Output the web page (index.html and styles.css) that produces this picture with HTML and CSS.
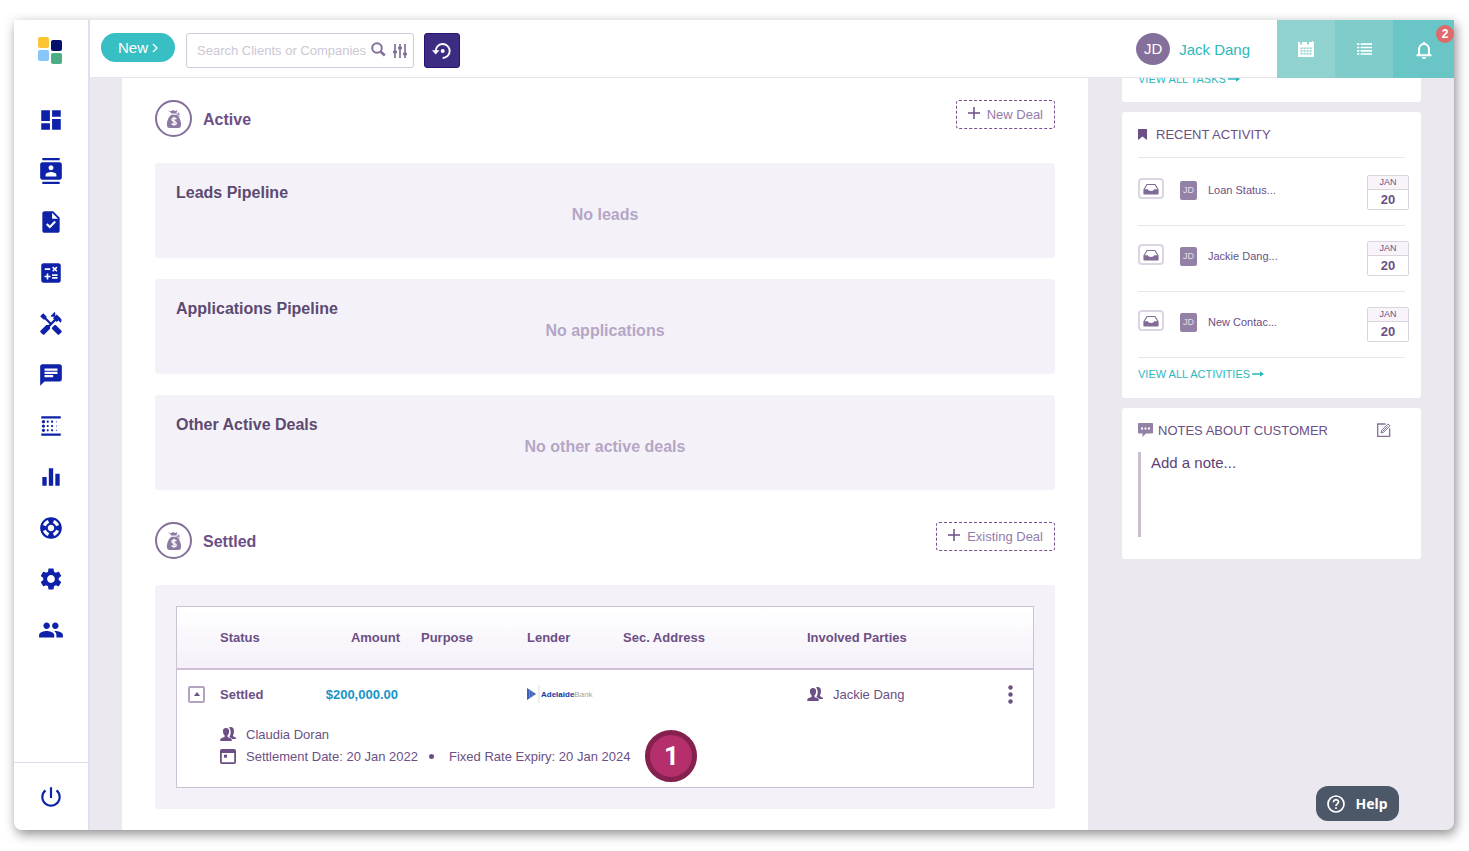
FILE: index.html
```
<!DOCTYPE html>
<html lang="en">
<head>
  <meta charset="utf-8">
  <title>Deals</title>
  <link rel="stylesheet" href="styles.css">
</head>
<body>
<svg class="defs" aria-hidden="true">
  <symbol id="moneybag" viewBox="0 0 16 20">
    <path d="M2 1.500l3 .7 2-1.200 2 1 2.500-.8L10.200 4.500H5.300L4.500 3.200z"/>
    <path d="M10.500 5l3 .4-1.300-2 M11 5.500l2.500 2.500" fill="none" stroke="currentColor" stroke-width="1"/>
    <path d="M5.300 5.800h5C13.500 8 15.500 12.500 15 16.500c-.2 1.700-1 2.500-2.700 2.500H3.700C2 19 1.200 18.200 1 16.500.500 12.500 2.500 8 5.300 5.800z"/>
    <path d="M10.300 10.200C9.800 9 6 8.700 5.900 10.700c0 2 4.400 1.300 4.400 3.500 0 2-4 1.900-4.600.3M8 7.800v9" fill="none" stroke="#fff" stroke-width="1.300"/>
  </symbol>
  <symbol id="people" viewBox="0 0 16 14">
    <path d="M6 1C3.700 1 2.700 2.600 3 5c.2 1.700.8 2.700 1.600 3.300v1.400C4.400 10.800 1 10.600.3 12.200V14h11.400v-1.800C11 10.600 7.700 10.800 7.500 9.700V8.300C8.300 7.700 8.900 6.700 9.100 5c.2-2.400-.8-4-3.100-4z"/>
    <path d="M9 .4c3-1 5 .6 4.900 3.100-.1 1.700.4 2.700-.9 4.500v1c.4 1 2.400.8 2.900 2.100V12h-3.600C11.500 10.800 9.700 10.500 9.400 9.700 11 7.500 11.400 3 9 .4z"/>
  </symbol>
  <symbol id="inbox" viewBox="0 0 16 12">
    <path d="M1 6.500L4 1.500h8l3 5" fill="none" stroke="currentColor" stroke-width="1.100"/>
    <path d="M.4 6.300h4.400c.5 2.200 5.900 2.200 6.400 0h4.400v4.200c0 .7-.4 1-1 1H1.400c-.6 0-1-.3-1-1z"/>
  </symbol>
  <symbol id="arrow" viewBox="0 0 12 8">
    <path d="M0 3.300h8V1.300L12 4 8 6.700v-2H0z"/>
  </symbol>
</svg>

<div class="window">
  <nav class="sidebar">
    <a class="logo" href="#" aria-label="Home">
      <svg width="24" height="27" viewBox="0 0 24 27">
        <rect x="0" y="0" width="11" height="11" rx="2" fill="#fcc434"/>
        <rect x="13" y="3" width="11" height="11" rx="2" fill="#05106b"/>
        <rect x="0" y="13" width="11" height="11" rx="2" fill="#88c6f7"/>
        <rect x="13" y="16" width="11" height="11" rx="2" fill="#4cae84"/>
      </svg>
    </a>
    <div class="menu">
      <a href="#" aria-label="Dashboard"><svg viewBox="0 0 24 24"><path d="M3 13h8V3H3v10zm0 8h8v-6H3v6zm10 0h8V11h-8v10zm0-18v6h8V3h-8z"/></svg></a>
      <a href="#" aria-label="Contacts"><svg viewBox="0 0 24 24"><path d="M20 0H4v2h16V0zM4 24h16v-2H4v2zM20 4H4c-1.100 0-2 .9-2 2v12c0 1.100.9 2 2 2h16c1.100 0 2-.9 2-2V6c0-1.100-.9-2-2-2zm-8 2.750c1.240 0 2.250 1.010 2.250 2.250s-1.010 2.250-2.250 2.250S9.750 10.240 9.750 9 10.760 6.750 12 6.750zM17 17H7v-1.500c0-1.670 3.330-2.500 5-2.500s5 .83 5 2.500V17z"/></svg></a>
      <a href="#" aria-label="Tasks"><svg viewBox="0 0 24 24"><path d="M14 2H6c-1.100 0-1.990.9-1.990 2L4 20c0 1.100.89 2 1.990 2H18c1.100 0 2-.9 2-2V8l-6-6zm-3.060 16L7.400 14.460l1.410-1.410 2.120 2.120 4.240-4.240 1.410 1.410L10.940 18zM13 9V3.500L18.500 9H13z"/></svg></a>
      <a href="#" aria-label="Calculators"><svg viewBox="0 0 24 24"><path d="M19 3H5c-1.100 0-2 .9-2 2v14c0 1.100.9 2 2 2h14c1.100 0 2-.9 2-2V5c0-1.100-.9-2-2-2zm-5.970 4.060L14.090 6l1.410 1.410L16.910 6l1.060 1.060-1.410 1.410 1.410 1.410-1.060 1.060-1.410-1.400-1.410 1.410-1.060-1.060 1.410-1.410-1.410-1.420zm-6.780.66h5v1.500h-5v-1.500zM11.500 16h-2v2H8v-2H6v-1.500h2v-2h1.500v2h2V16zm6.500 1.250h-5v-1.500h5v1.500zm0-2.500h-5v-1.500h5v1.500z"/></svg></a>
      <a href="#" aria-label="Tools"><svg viewBox="0 0 24 24"><path d="M21.670 18.170l-5.300-5.300h-.99l-2.540 2.540v.99l5.300 5.300c.39.39 1.020.39 1.410 0l2.120-2.120c.39-.38.39-1.020 0-1.410z"/><path d="M17.340 10.190l1.410-1.410 2.120 2.120c1.170-1.170 1.170-3.070 0-4.240l-3.540-3.540-1.410 1.410V1.710L15.220 1l-3.540 3.540.71.71h2.830l-1.410 1.410 1.060 1.060-2.890 2.890-4.130-4.130V5.060L4.830 2.040 2 4.870 5.030 7.900h1.410l4.130 4.130-.85.85H7.600l-5.300 5.300c-.39.39-.39 1.020 0 1.410l2.120 2.120c.39.39 1.020.39 1.410 0l5.300-5.300v-2.120l5.150-5.150 1.060 1.050z"/></svg></a>
      <a href="#" aria-label="Messages"><svg viewBox="0 0 24 24"><path d="M20 2H4c-1.100 0-1.990.9-1.990 2L2 22l4-4h14c1.100 0 2-.9 2-2V4c0-1.100-.9-2-2-2zM6 9h12v2H6V9zm8 5H6v-2h8v2zm4-6H6V6h12v2z"/></svg></a>
      <a href="#" aria-label="Pipelines"><svg viewBox="0 0 24 24"><path d="M5 17.500c.83 0 1.500-.67 1.500-1.500s-.67-1.500-1.500-1.500-1.500.67-1.500 1.500.67 1.500 1.500 1.500zM9 13c.55 0 1-.45 1-1s-.45-1-1-1-1 .45-1 1 .45 1 1 1zm0-4c.55 0 1-.45 1-1s-.45-1-1-1-1 .45-1 1 .45 1 1 1zM3 21h18v-2H3v2zM5 9.500c.83 0 1.500-.67 1.500-1.500S5.830 6.500 5 6.500 3.500 7.170 3.500 8 4.170 9.500 5 9.500zm0 4c.83 0 1.500-.67 1.500-1.500s-.67-1.500-1.500-1.500-1.500.67-1.500 1.500.67 1.500 1.500 1.500zM9 17c.55 0 1-.45 1-1s-.45-1-1-1-1 .45-1 1 .45 1 1 1zm8-.5c.28 0 .5-.22.5-.5s-.22-.5-.5-.5-.5.22-.5.5.22.5.5.5zM3 3v2h18V3H3zm14 5.500c.28 0 .5-.22.5-.5s-.22-.5-.5-.5-.5.22-.5.5.22.5.5.5zm0 4c.28 0 .5-.22.5-.5s-.22-.5-.5-.5-.5.22-.5.5.22.5.5.5zM13 9c.55 0 1-.45 1-1s-.45-1-1-1-1 .45-1 1 .45 1 1 1zm0 4c.55 0 1-.45 1-1s-.45-1-1-1-1 .45-1 1 .45 1 1 1zm0 4c.55 0 1-.45 1-1s-.45-1-1-1-1 .45-1 1 .45 1 1 1z"/></svg></a>
      <a href="#" aria-label="Reports"><svg viewBox="0 0 24 24"><path d="M10 20h4V4h-4v16zm-6 0h4v-8H4v8zM16 9v11h4V9h-4z"/></svg></a>
      <a href="#" aria-label="Support"><svg viewBox="0 0 24 24"><path d="M12 2C6.480 2 2 6.480 2 12s4.480 10 10 10 10-4.480 10-10S17.520 2 12 2zm7.460 7.120l-2.780 1.150c-.51-1.360-1.580-2.440-2.950-2.940l1.150-2.780c2.100.8 3.770 2.470 4.580 4.570zM12 15c-1.660 0-3-1.340-3-3s1.340-3 3-3 3 1.340 3 3-1.340 3-3 3zM9.130 4.540l1.170 2.780c-1.380.5-2.470 1.590-2.980 2.970L4.540 9.130c.81-2.110 2.480-3.780 4.590-4.590zM4.540 14.870l2.780-1.150c.51 1.380 1.590 2.460 2.970 2.960l-1.170 2.780c-2.100-.81-3.770-2.480-4.580-4.590zm10.340 4.590l-1.150-2.780c1.370-.51 2.450-1.590 2.950-2.970l2.780 1.170c-.81 2.100-2.480 3.770-4.580 4.580z"/></svg></a>
      <a href="#" aria-label="Settings"><svg viewBox="0 0 24 24"><path d="M19.140 12.940c.04-.3.060-.61.060-.94 0-.32-.02-.64-.07-.94l2.030-1.580c.18-.14.23-.41.12-.61l-1.920-3.320c-.12-.22-.37-.29-.59-.22l-2.390.96c-.5-.38-1.030-.7-1.620-.94l-.36-2.540c-.04-.24-.24-.41-.48-.41h-3.840c-.24 0-.43.17-.47.41l-.36 2.540c-.59.24-1.130.57-1.620.94l-2.390-.96c-.22-.08-.47 0-.59.22L2.740 8.870c-.12.21-.08.47.12.61l2.030 1.580c-.05.3-.09.63-.09.94s.02.64.07.94l-2.030 1.580c-.18.14-.23.41-.12.61l1.920 3.320c.12.22.37.29.59.22l2.390-.96c.5.38 1.030.7 1.620.94l.36 2.540c.05.24.24.41.48.41h3.840c.24 0 .44-.17.47-.41l.36-2.540c.59-.24 1.130-.56 1.620-.94l2.390.96c.22.08.47 0 .59-.22l1.920-3.320c.12-.22.07-.47-.12-.61l-2.010-1.580zM12 15.600c-1.980 0-3.600-1.620-3.600-3.600s1.620-3.600 3.600-3.600 3.600 1.620 3.600 3.600-1.620 3.600-3.600 3.600z"/></svg></a>
      <a href="#" aria-label="Team"><svg viewBox="0 0 24 24"><path d="M16 11c1.660 0 2.990-1.340 2.990-3S17.660 5 16 5s-3 1.340-3 3 1.340 3 3 3zm-8 0c1.660 0 2.990-1.340 2.990-3S9.660 5 8 5 5 6.340 5 8s1.340 3 3 3zm0 2c-2.330 0-7 1.170-7 3.500V19h14v-2.500c0-2.330-4.670-3.500-7-3.500zm8 0c-.29 0-.62.02-.97.05 1.160.84 1.970 1.970 1.970 3.450V19h6v-2.500c0-2.330-4.670-3.500-7-3.500z"/></svg></a>
    </div>
    <div class="logout">
      <a href="#" aria-label="Log out"><svg viewBox="0 0 24 24"><path d="M13 3h-2v10h2V3zm4.830 2.170l-1.420 1.420C17.990 7.860 19 9.810 19 12c0 3.870-3.130 7-7 7s-7-3.130-7-7c0-2.190 1.010-4.140 2.580-5.420L6.170 5.170C4.230 6.820 3 9.260 3 12c0 4.970 4.030 9 9 9s9-4.030 9-9c0-2.740-1.230-5.180-3.170-6.830z"/></svg></a>
    </div>
  </nav>

  <div class="page">
    <header class="topbar">
      <button class="new-button">New
        <svg width="6" height="10" viewBox="0 0 6 10"><path d="M1 1l4 4-4 4" fill="none" stroke="#fff" stroke-width="1.300"/></svg>
      </button>
      <div class="search">
        <input type="text" placeholder="Search Clients or Companies" aria-label="Search Clients or Companies">
        <svg class="magnifier" width="15" height="15" viewBox="0 0 15 15"><circle cx="6" cy="6" r="4.800" fill="none" stroke="currentColor" stroke-width="2"/><path d="M9.500 9.500l4.300 4" stroke="currentColor" stroke-width="2.500"/></svg>
        <svg class="sliders" width="14" height="14" viewBox="0 0 14 14"><path d="M2 0v14M7 0v14M12 0v14" stroke="currentColor" stroke-width="1.700"/><path d="M0 8h4M5 4h4M10 10h4" stroke="currentColor" stroke-width="2.400"/></svg>
      </div>
      <button class="history-button" aria-label="History">
        <svg width="20" height="18" viewBox="0 0 20 18"><path d="M3.700 9.500a7 7 0 1 1 7 6.500" fill="none" stroke="#fff" stroke-width="1.900"/><path d="M0 8.200h7.500L3.700 12.500z" fill="#fff"/><circle cx="10.700" cy="9" r="2" fill="#fff"/></svg>
      </button>
      <a class="user" href="#"><span class="avatar">JD</span>Jack Dang</a>
      <div class="shortcuts">
        <button class="calendar-button" aria-label="Calendar">
          <svg width="16" height="16" viewBox="0 0 16 16"><path d="M0 1h2v2.500h2V1h5v2.500h2V1h3V0h1v1h1v15H0z" fill="#fff"/><path d="M2.500 6.500h11v7h-11z" fill="#8fd2d0"/><path d="M2.500 8.700h11M2.500 11.300h11M5 6.500v7M8 6.500v7M11 6.500v7" stroke="#fff"/></svg>
        </button>
        <button class="list-button" aria-label="List">
          <svg width="15" height="12" viewBox="0 0 15 12"><path d="M0 1.200h2.400M0 4.500h2.400M0 7.800h2.400M0 11h2.400M3.600 1.200H15M3.600 4.500H15M3.600 7.800H15M3.600 11H15" stroke="#fff" stroke-width="1.700"/></svg>
        </button>
        <button class="bell-button" aria-label="Notifications">
          <svg width="16" height="18" viewBox="0 0 16 18"><path d="M3 13V7.500C3 4.500 5 2 8 2s5 2.500 5 5.500V13M.5 13.200h15" fill="none" stroke="#fff" stroke-width="2"/><path d="M7 0h2v2H7zM6 15h4a2 2 0 0 1-4 0z" fill="#fff"/></svg>
          <span class="count">2</span>
        </button>
      </div>
    </header>

    <div class="content">
      <main class="deals">
        <div class="section-head">
          <span class="bag"><svg width="16" height="20"><use href="#moneybag"/></svg></span>
          <h2>Active</h2>
          <button class="deal-button"><svg width="12" height="12" viewBox="0 0 12 12"><path d="M6 0v12M0 6h12" stroke="currentColor" stroke-width="1.500"/></svg>New Deal</button>
        </div>
        <section class="pipeline">
          <h3>Leads Pipeline</h3>
          <p>No leads</p>
        </section>
        <section class="pipeline">
          <h3>Applications Pipeline</h3>
          <p>No applications</p>
        </section>
        <section class="pipeline">
          <h3>Other Active Deals</h3>
          <p>No other active deals</p>
        </section>

        <div class="section-head settled">
          <span class="bag"><svg width="16" height="20"><use href="#moneybag"/></svg></span>
          <h2>Settled</h2>
          <button class="deal-button"><svg width="12" height="12" viewBox="0 0 12 12"><path d="M6 0v12M0 6h12" stroke="currentColor" stroke-width="1.500"/></svg>Existing Deal</button>
        </div>
        <section class="table-box">
          <table>
            <colgroup>
              <col class="col-toggle"><col class="col-status"><col class="col-amount"><col class="col-purpose"><col class="col-lender"><col class="col-address"><col><col class="col-menu">
            </colgroup>
            <thead>
              <tr>
                <th></th>
                <th>Status</th>
                <th class="amount">Amount</th>
                <th>Purpose</th>
                <th>Lender</th>
                <th>Sec. Address</th>
                <th>Involved Parties</th>
                <th></th>
              </tr>
            </thead>
            <tbody>
              <tr class="deal">
                <td><button class="toggle" aria-label="Collapse"><svg width="6" height="4" viewBox="0 0 6 4"><path d="M3 0l3 4H0z"/></svg></button></td>
                <td class="status">Settled</td>
                <td class="amount">$200,000.00</td>
                <td></td>
                <td>
                  <span class="bank">
                    <svg width="13" height="18" viewBox="0 0 13 18"><path d="M0 3l9 6-9 6z" fill="#3c62b8"/><path d="M2.500 4v10M5 6v6" stroke="#8fa8dc" stroke-width=".6"/><path d="M12 0v18" stroke="#ddd"/></svg>
                    <span><b>Adelaide</b>Bank</span>
                  </span>
                </td>
                <td></td>
                <td><span class="party"><svg width="16" height="14"><use href="#people"/></svg>Jackie Dang</span></td>
                <td><button class="more" aria-label="More"><svg width="5" height="19" viewBox="0 0 5 19"><circle cx="2.500" cy="2.500" r="2.200"/><circle cx="2.500" cy="9.500" r="2.200"/><circle cx="2.500" cy="16.500" r="2.200"/></svg></button></td>
              </tr>
              <tr class="details">
                <td></td>
                <td colspan="7">
                  <div class="line"><svg width="16" height="14"><use href="#people"/></svg>Claudia Doran</div>
                  <div class="line">
                    <svg width="16" height="15" viewBox="0 0 16 15"><path d="M0 2C0 .7.700 0 2 0h12c1.300 0 2 .7 2 2v11c0 1.300-.7 2-2 2H2c-1.300 0-2-.7-2-2zm1.800 2v9.300h12.400V4z" fill-rule="evenodd"/><path d="M4 5.700h3v3H4z"/></svg>
                    Settlement Date: 20 Jan 2022
                    <span class="dot"></span>
                    <span class="expiry">Fixed Rate Expiry: 20 Jan 2024<span class="step">1</span></span>
                  </div>
                </td>
              </tr>
            </tbody>
          </table>
        </section>
      </main>

      <aside>
        <section class="card tasks">
          <a class="view-all" href="#">VIEW ALL TASKS <svg width="12" height="8"><use href="#arrow"/></svg></a>
        </section>
        <section class="card activity">
          <h4><svg width="9" height="11" viewBox="0 0 9 11"><path d="M0 0h9v11L4.500 7.500 0 11z"/></svg>RECENT ACTIVITY</h4>
          <ul>
            <li>
              <div class="event"><span class="tray"><svg width="16" height="12"><use href="#inbox"/></svg></span><span class="initials">JD</span>Loan Status...</div>
              <div class="date"><span>JAN</span><b>20</b></div>
            </li>
            <li>
              <div class="event"><span class="tray"><svg width="16" height="12"><use href="#inbox"/></svg></span><span class="initials">JD</span>Jackie Dang...</div>
              <div class="date"><span>JAN</span><b>20</b></div>
            </li>
            <li>
              <div class="event"><span class="tray"><svg width="16" height="12"><use href="#inbox"/></svg></span><span class="initials">JD</span>New Contac...</div>
              <div class="date"><span>JAN</span><b>20</b></div>
            </li>
          </ul>
          <a class="view-all" href="#">VIEW ALL ACTIVITIES <svg width="12" height="8"><use href="#arrow"/></svg></a>
        </section>
        <section class="card notes">
          <h4>
            <svg class="bubble" width="15" height="14" viewBox="0 0 15 14"><path d="M1 0h13c.6 0 1 .4 1 1v8.500c0 .6-.4 1-1 1H8L4.500 14v-3.500H1c-.6 0-1-.4-1-1V1c0-.6.4-1 1-1z"/><path d="M3 4.500h2v2H3zM6.500 4.500h2v2h-2zM10 4.500h2v2h-2z" fill="#fff"/></svg>
            <label for="note">NOTES ABOUT CUSTOMER</label>
            <button class="edit" aria-label="Edit note"><svg width="14" height="14" viewBox="0 0 14 14"><g fill="none" stroke="currentColor"><path d="M8.500 1H.7v12.300h12V5.500" stroke-width="1.300"/><path d="M4 10l.7-2.800L11 .9l2 2-6.300 6.300zM5.500 8.500l5-5"/></g></svg></button>
          </h4>
          <textarea id="note" placeholder="Add a note..."></textarea>
        </section>
      </aside>
    </div>
  </div>

  <button class="help">
    <svg width="18" height="18" viewBox="0 0 18 18"><g fill="none" stroke="#fff" stroke-width="1.700"><circle cx="9" cy="9" r="8"/><path d="M6.500 7.200C6.500 3.800 11.600 4 11.500 7c0 1.900-2.500 2-2.500 4M9 12.300v1.800"/></g></svg>
    Help
  </button>
</div>
</body>
</html>
```
FILE: styles.css
```
* {
  box-sizing: border-box;
}

body {
  margin: 0;
  padding: 20px 15px 21px 14px;
  height: 100vh;
  background: #fff;
  color: #6c4f85;
  font-family: "Liberation Sans", Arial, sans-serif;
  font-size: 13px;
  overflow: hidden;
}

h2, h3, h4, p, ul {
  margin: 0;
  padding: 0;
}

button {
  padding: 0;
  border: none;
  background: none;
  color: inherit;
  font-family: inherit;
  cursor: pointer;
}

a {
  text-decoration: none;
}

svg {
  display: block;
  flex: none;
  fill: currentColor;
}

.defs {
  position: absolute;
  width: 0;
  height: 0;
}

.window {
  position: relative;
  display: flex;
  height: 100%;
  border-radius: 0 0 8px 8px;
  background: #ebe8f0;
  box-shadow: 2px 4px 12px rgba(0, 0, 0, 0.45);
}

/* sidebar */

.sidebar {
  display: flex;
  flex-direction: column;
  flex: none;
  width: 76px;
  border-right: 2px solid #dedff0;
  border-radius: 0 0 0 8px;
  background: #fff;
  color: #0d22a8;
}

.sidebar a {
  color: inherit;
}

.logo {
  padding: 17px 0 0 24px;
}

.menu {
  display: flex;
  flex-direction: column;
  flex: 1;
  align-items: center;
  gap: 25px;
  padding-top: 43px;
}

.menu svg,
.logout svg {
  width: 26px;
  height: 26px;
}

.logout {
  display: flex;
  align-items: center;
  justify-content: center;
  height: 68px;
  border-top: 1px solid #dadcf0;
}

/* top bar */

.page {
  display: flex;
  flex-direction: column;
  flex: 1;
  min-width: 0;
}

.topbar {
  display: flex;
  align-items: flex-start;
  flex: none;
  height: 58px;
  padding: 13px 0 0 11px;
  border-bottom: 1px solid #e6e4ea;
  background: #fff;
}

.new-button {
  display: flex;
  align-items: center;
  justify-content: center;
  gap: 4px;
  width: 74px;
  height: 29px;
  border-radius: 15px;
  background: #38bfc3;
  color: #fff;
  font-size: 15px;
}

.search {
  display: flex;
  align-items: center;
  width: 228px;
  height: 35px;
  margin: 0 10px 0 11px;
  padding: 0 6px 0 10px;
  border: 1px solid #d2cad9;
  border-radius: 3px;
  color: #84709b;
}

.search input {
  flex: 1;
  min-width: 0;
  padding: 0;
  border: none;
  outline: none;
  background: none;
  font-family: inherit;
  font-size: 13px;
}

.search input::placeholder {
  color: #cdc7d4;
}

.magnifier {
  margin-bottom: 3px;
}

.sliders {
  margin-left: 7px;
}

.history-button {
  display: flex;
  align-items: center;
  justify-content: center;
  width: 36px;
  height: 35px;
  border: 1px solid #2a1273;
  border-radius: 3px;
  background: #3d2c82;
}

.user {
  display: flex;
  align-items: center;
  gap: 9px;
  height: 32px;
  margin-left: auto;
  color: #2bb8bc;
  font-size: 15px;
}

.avatar {
  width: 34px;
  height: 32px;
  border-radius: 50%;
  background: #84709b;
  color: #fff;
  line-height: 32px;
  text-align: center;
}

.shortcuts {
  display: flex;
  height: 58px;
  margin: -13px 0 0 27px;
}

.shortcuts button {
  display: flex;
  align-items: center;
  justify-content: center;
  width: 58px;
}

.shortcuts .calendar-button {
  background: #8fd2d0;
}

.shortcuts .list-button {
  background: #7fcccb;
}

.shortcuts .bell-button {
  position: relative;
  width: 61px;
  padding-top: 4px;
  background: #6ac5c6;
}

.count {
  position: absolute;
  top: 5px;
  right: 0;
  width: 18px;
  height: 18px;
  border-radius: 50%;
  background: #df6a6c;
  color: #fff;
  font-size: 12px;
  font-weight: bold;
  line-height: 18px;
}

/* deals */

.content {
  display: flex;
  flex: 1;
  gap: 34px;
  min-height: 0;
  padding: 0 33px 0 32px;
  overflow: hidden;
}

.deals {
  flex: 1;
  min-width: 0;
  padding: 22px 33px 20px;
  background: #fff;
}

.section-head {
  display: flex;
  height: 37px;
  margin-bottom: 26px;
}

.section-head.settled {
  margin-top: 32px;
}

.bag {
  display: flex;
  align-items: center;
  justify-content: center;
  width: 37px;
  height: 37px;
  border: 2px solid #84709b;
  border-radius: 50%;
  color: #8d7aa3;
}

h2 {
  flex: 1;
  margin-left: 11px;
  font-size: 16px;
  line-height: 40px;
}

.deal-button {
  display: flex;
  align-items: center;
  gap: 7px;
  height: 29px;
  padding: 0 11px;
  border: 1px dashed #7a4f90;
  border-radius: 3px;
  color: #927ca9;
  font-size: 13px;
}

.deal-button svg {
  margin-bottom: 3px;
  color: #6c4f85;
}

.pipeline {
  min-height: 95px;
  margin-bottom: 21px;
  padding: 20px 21px;
  border-radius: 3px;
  background: #f4f2f8;
}

.pipeline h3 {
  color: #5d4a70;
  font-size: 16px;
  line-height: 20px;
}

.pipeline p {
  color: #b5a6c6;
  font-size: 16px;
  font-weight: bold;
  line-height: 24px;
  text-align: center;
}

.table-box {
  padding: 21px;
  border-radius: 3px;
  background: #f4f2f8;
}

table {
  width: 100%;
  table-layout: fixed;
  border: 1px solid #cbc2d2;
  border-spacing: 0;
  background: #fff;
}

.col-toggle { width: 43px; }
.col-status { width: 90px; }
.col-amount { width: 111px; }
.col-purpose { width: 106px; }
.col-lender { width: 96px; }
.col-address { width: 184px; }
.col-menu { width: 48px; }

th {
  height: 63px;
  padding: 0;
  border-bottom: 2px solid #cdbfd6;
  text-align: left;
}

thead {
  background: linear-gradient(#fff, #f5f0f9);
}

td {
  padding: 0;
}

.deal td {
  height: 48px;
}

th.amount {
  padding-right: 21px;
  text-align: right;
}

td.amount {
  padding-right: 23px;
  color: #1794c8;
  font-weight: bold;
  text-align: right;
}

.status {
  font-weight: bold;
}

.toggle {
  display: flex;
  align-items: center;
  justify-content: center;
  width: 17px;
  height: 17px;
  margin-left: 11px;
  border: 2px solid #b3a3c0;
  border-radius: 2px;
}

.bank {
  display: flex;
  align-items: center;
  gap: 1px;
  color: #a5a59c;
  font-size: 8px;
}

.bank b {
  color: #1238a0;
}

.party {
  display: flex;
  align-items: center;
  gap: 10px;
}

.more {
  display: block;
  margin-left: 23px;
}

.details td {
  padding: 5px 0 20px;
}

.line {
  display: flex;
  align-items: center;
  gap: 10px;
  height: 22px;
}

.dot {
  width: 5px;
  height: 5px;
  margin: 0 5px 0 1px;
  border-radius: 50%;
  background: #6c4f85;
}

.expiry {
  position: relative;
}

.step {
  position: absolute;
  top: -19px;
  left: 100%;
  width: 52px;
  height: 52px;
  margin-left: 15px;
  border: 5px solid #84214f;
  border-radius: 50%;
  background: #b42f6b;
  color: #fff;
  font-family: Roboto, sans-serif;
  font-size: 26px;
  font-weight: bold;
  line-height: 42px;
  text-align: center;
}

/* right column */

aside {
  flex: none;
  width: 299px;
}

.card {
  margin-bottom: 10px;
  padding: 0 16px;
  border-radius: 3px;
  background: #fff;
}

.card h4 {
  display: flex;
  align-items: center;
  height: 44px;
  font-size: 13px;
  font-weight: normal;
}

.view-all {
  display: flex;
  align-items: center;
  gap: 2px;
  color: #2bb8bc;
  font-size: 11px;
  line-height: 14px;
}

/* scrolled partly under the top bar */
.tasks {
  margin-top: -24px;
  padding-top: 18px;
  padding-bottom: 16px;
}

.activity {
  padding-bottom: 17px;
}

.activity h4 {
  gap: 9px;
  height: 46px;
  border-bottom: 1px solid #e8e6ea;
}

.activity ul {
  padding: 2px 0 9px;
  list-style: none;
}

.activity li {
  display: flex;
  justify-content: space-between;
  height: 66px;
  padding-top: 15px;
  border-bottom: 1px solid #e8e6ea;
}

.event {
  display: flex;
  align-items: center;
  height: 30px;
  font-size: 11px;
}

.tray {
  display: flex;
  align-items: center;
  justify-content: center;
  width: 26px;
  height: 21px;
  margin: 0 16px 3px 0;
  border: 2px solid #dcd3e3;
  border-radius: 4px;
  color: #806a96;
}

.initials {
  width: 17px;
  height: 19px;
  margin-right: 11px;
  border-radius: 2px;
  background: #9381a6;
  color: #e6dfec;
  font-size: 9px;
  line-height: 19px;
  text-align: center;
}

.date {
  width: 42px;
  height: 35px;
  margin-right: -4px;
  border: 1px solid #d8d5dc;
  border-radius: 2px;
  text-align: center;
}

.date span {
  display: block;
  border-bottom: 1px solid #d8d5dc;
  background: #f8f4fa;
  font-size: 9px;
  line-height: 13px;
}

.date b {
  display: block;
  line-height: 20px;
}

.notes {
  padding-bottom: 22px;
}

.bubble {
  margin-right: 5px;
  color: #9381a6;
}

.edit {
  margin: 0 14px 0 auto;
  color: #84709b;
}

textarea {
  display: block;
  width: 100%;
  height: 85px;
  padding: 2px 10px;
  border: none;
  border-left: 3px solid #cabfd1;
  outline: none;
  background: none;
  color: #5d3f78;
  font-family: inherit;
  font-size: 15px;
  resize: none;
}

textarea::placeholder {
  color: #5d3f78;
}

.help {
  position: absolute;
  right: 55px;
  bottom: 9px;
  display: flex;
  align-items: center;
  justify-content: center;
  gap: 10px;
  width: 83px;
  height: 35px;
  border-radius: 12px;
  background: #4c5767;
  color: #fff;
  font-family: "Noto Sans", sans-serif;
  font-size: 14px;
  font-weight: bold;
}
```
